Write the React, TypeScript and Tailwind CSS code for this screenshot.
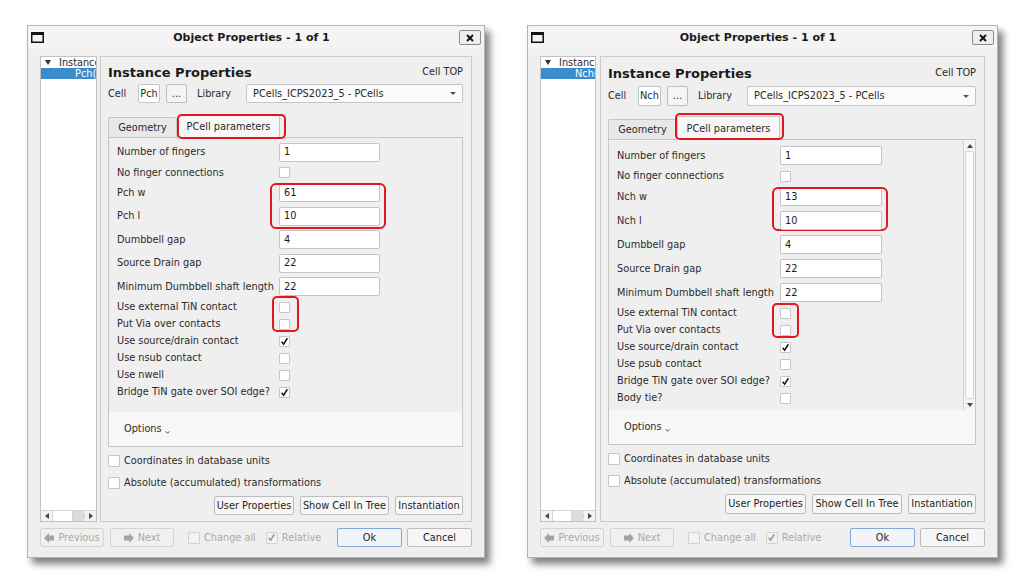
import React from "react";

type Row = { label: string; kind: "in" | "cb"; value?: string; on?: boolean; mark?: "in" | "cb" };

const PCH: Row[] = [
  { label: "Number of fingers", kind: "in", value: "1" },
  { label: "No finger connections", kind: "cb" },
  { label: "Pch w", kind: "in", value: "61", mark: "in" },
  { label: "Pch l", kind: "in", value: "10" },
  { label: "Dumbbell gap", kind: "in", value: "4" },
  { label: "Source Drain gap", kind: "in", value: "22" },
  { label: "Minimum Dumbbell shaft length", kind: "in", value: "22" },
  { label: "Use external TiN contact", kind: "cb", mark: "cb" },
  { label: "Put Via over contacts", kind: "cb" },
  { label: "Use source/drain contact", kind: "cb", on: true },
  { label: "Use nsub contact", kind: "cb" },
  { label: "Use nwell", kind: "cb" },
  { label: "Bridge TiN gate over SOI edge?", kind: "cb", on: true },
];

const NCH: Row[] = [
  { label: "Number of fingers", kind: "in", value: "1" },
  { label: "No finger connections", kind: "cb" },
  { label: "Nch w", kind: "in", value: "13", mark: "in" },
  { label: "Nch l", kind: "in", value: "10" },
  { label: "Dumbbell gap", kind: "in", value: "4" },
  { label: "Source Drain gap", kind: "in", value: "22" },
  { label: "Minimum Dumbbell shaft length", kind: "in", value: "22" },
  { label: "Use external TiN contact", kind: "cb", mark: "cb" },
  { label: "Put Via over contacts", kind: "cb" },
  { label: "Use source/drain contact", kind: "cb", on: true },
  { label: "Use psub contact", kind: "cb" },
  { label: "Bridge TiN gate over SOI edge?", kind: "cb", on: true },
  { label: "Body tie?", kind: "cb" },
];

function Box({ on = false, dim = false, big = false }: { on?: boolean; dim?: boolean; big?: boolean }) {
  return (
    <span
      className={`flex shrink-0 items-center justify-center rounded-[1px] border ${big ? "h-[12px] w-[12px]" : "h-[11px] w-[11px]"} ${
        dim ? "border-[#d2d2d2] bg-[#f3f3f3]" : "border-[#c6c6c6] bg-white"
      }`}
    >
      {on && (
        <svg viewBox="0 0 10 10" className="h-[9px] w-[9px]">
          <path d="M1.8 5.4 L4 8 L8.2 1.4" fill="none" stroke={dim ? "#9c9c9c" : "#151515"} strokeWidth="1.7" />
        </svg>
      )}
    </span>
  );
}

function Btn({ children, className = "", dim = false, focus = false }: { children: React.ReactNode; className?: string; dim?: boolean; focus?: boolean }) {
  return (
    <div
      className={`flex items-center justify-center gap-[4px] rounded-[2px] border whitespace-nowrap ${
        focus
          ? "border-[#7fa9d6] bg-[#f1f4f8] text-[#1f1f1f]"
          : dim
          ? "border-[#d3d3d3] bg-[#f0f0f0] text-[#a9a9a9]"
          : "border-[#bcbcbc] bg-[#f6f6f6] text-[#1f1f1f]"
      } ${className}`}
    >
      {children}
    </div>
  );
}

function Arrow({ left }: { left: boolean }) {
  return (
    <svg viewBox="0 0 10 10" className="h-[10px] w-[10px]">
      <path
        d={left ? "M0 5 L5 0 L5 2.5 L10 2.5 L10 7.5 L5 7.5 L5 10 Z" : "M10 5 L5 0 L5 2.5 L0 2.5 L0 7.5 L5 7.5 L5 10 Z"}
        fill="#a3a3a3"
      />
    </svg>
  );
}

function Dialog({ n }: { n: boolean }) {
  const rows = n ? NCH : PCH;
  return (
    <div
      className={`flex flex-col border border-[#b4b4b4] bg-[#efefef] shadow-[5px_6px_7px_rgba(0,0,0,0.5)] ${
        n ? "w-[471px]" : "w-[458px]"
      }`}
    >
      {/* title bar */}
      <div className="flex h-[23px] items-center bg-[#f4f4f4] px-[3px]">
        <svg width="13" height="11" viewBox="0 0 13 11">
          <rect x="0.75" y="0.75" width="11.5" height="9.5" fill="none" stroke="#111" strokeWidth="1.5" />
          <rect x="0" y="0" width="13" height="3" fill="#111" />
        </svg>
        <div className="flex-1 text-center text-[11px] font-bold text-[#1b1b1b]">Object Properties - 1 of 1</div>
        <div className="flex h-[15px] w-[22px] items-center justify-center rounded-[2px] border border-[#8c8c8c] bg-[#eeeeee]">
          <svg viewBox="0 0 8 8" className="h-[8px] w-[8px]">
            <path d="M1 1 L7 7 M7 1 L1 7" stroke="#111" strokeWidth="1.9" />
          </svg>
        </div>
      </div>

      <div className="flex flex-col px-[12px] pb-[10px] pt-[7px]">
        <div className="flex h-[466px] gap-[3px]">
          {/* tree */}
          <div className={`flex flex-col border border-[#c2c2c2] bg-white ${n ? "w-[56px]" : "w-[57px]"}`}>
            <div className="flex h-[11px] items-center overflow-hidden whitespace-nowrap pl-[4px] text-[#2b2b2b]">
              <svg viewBox="0 0 6 5" className="h-[5px] w-[6px] shrink-0">
                <path d="M0 0 L6 0 L3 5 Z" fill="#333" />
              </svg>
              <span className="ml-[8px]">Instances</span>
            </div>
            <div className="flex h-[11px] items-center overflow-hidden whitespace-nowrap bg-[#3a8ccd] pl-[34px] text-white">
              {n ? "Nch(0,0)" : "Pch(0,0)"}
            </div>
            <div className="flex-1" />
            <div className="flex h-[11px] items-center border-t border-[#d4d4d4] bg-[#f3f3f3]">
              <div className="flex w-[11px] justify-center">
                <svg viewBox="0 0 4 6" className="h-[6px] w-[4px]">
                  <path d="M4 0 L0 3 L4 6 Z" fill="#444" />
                </svg>
              </div>
              <div className="h-full flex-1 border-x border-[#d4d4d4] bg-white" />
              <div className="h-full w-[11px] bg-[#dcdcdc]" />
              <div className="flex w-[12px] justify-center border-l border-[#d4d4d4]">
                <svg viewBox="0 0 4 6" className="h-[6px] w-[4px]">
                  <path d="M0 0 L4 3 L0 6 Z" fill="#444" />
                </svg>
              </div>
            </div>
          </div>

          {/* main panel */}
          <div className={`flex flex-1 flex-col border border-[#cacaca] pl-[7px] pr-[8px] ${n ? "ml-[1px] pt-[8px]" : "pt-[7px]"}`}>
            <div className="flex h-[16px] items-center justify-between">
              <span className="text-[13px] font-bold text-[#1b1b1b]">Instance Properties</span>
              <span>Cell TOP</span>
            </div>

            <div className={`flex items-center ${n ? "mt-[5px] h-[20px]" : "mt-[4px] h-[19px]"}`}>
              <span className="w-[30px]">Cell</span>
              <div className={`flex h-full items-center justify-center rounded-[2px] border border-[#c4c4c4] bg-white ${n ? "w-[23px]" : "w-[22px]"}`}>
                {n ? "Nch" : "Pch"}
              </div>
              <div className="ml-[6px] flex h-full w-[21px] items-center justify-center rounded-[2px] border border-[#bdbdbd] bg-[#f5f5f5]">
                ...
              </div>
              <span className="ml-[10px] w-[49px]">Library</span>
              <div className="flex h-full flex-1 items-center justify-between rounded-[2px] border border-[#c4c4c4] bg-[#fbfbfb] pl-[6px] pr-[6px]">
                <span>PCells_ICPS2023_5 - PCells</span>
                <svg viewBox="0 0 6 3" className="h-[3px] w-[6px]">
                  <path d="M0 0 L6 0 L3 3 Z" fill="#555" />
                </svg>
              </div>
            </div>

            {/* tabs */}
            <div className={`flex items-end ${n ? "mt-[10px] h-[23px]" : "mt-[12px] h-[22px]"}`}>
              <div className="flex h-[20px] w-[69px] items-center justify-center rounded-t-[2px] border border-b-0 border-[#c6c6c6] bg-[#e8e8e8]">
                Geometry
              </div>
              <div className={`relative z-10 -mb-px flex w-[103px] items-center justify-center rounded-t-[2px] border border-b-0 border-[#c6c6c6] bg-[#f7f7f7] ${n ? "h-[24px]" : "h-[23px]"}`}>
                PCell parameters
                <span
                  className={`absolute rounded-[5px] border-2 border-[#e3161d] ${
                    n ? "-left-[3px] -top-[4px] h-[27px] w-[109px]" : "-left-[1px] -top-[2px] h-[25px] w-[109px]"
                  }`}
                />
              </div>
            </div>

            {/* tab content */}
            <div className={`flex flex-col border border-[#c6c6c6] ${n ? "h-[306px]" : "h-[310px]"}`}>
              <div className="flex flex-1 overflow-hidden">
                <div className={`flex flex-1 flex-col ${n ? "pt-[3.5px]" : "pt-[2.5px]"}`}>
                  {rows.map((r) => (
                    <div key={r.label} className={`flex items-center ${r.kind === "in" ? (n ? "h-[24px]" : "h-[23.5px]") : "h-[17px]"}`}>
                      <span className={`whitespace-nowrap pl-[8px] ${n ? "w-[171px]" : "w-[170px]"}`}>{r.label}</span>
                      <div className="relative flex items-center">
                        {r.kind === "in" ? (
                          <div
                            className={`flex h-[19px] items-center rounded-[2px] border border-[#c4c4c4] bg-white pl-[4px] text-[#1b1b1b] ${
                              n ? "w-[102px]" : "w-[101px]"
                            }`}
                          >
                            {r.value}
                          </div>
                        ) : (
                          <Box on={r.on} />
                        )}
                        {r.mark === "in" && (
                          <span
                            className={`absolute rounded-[6px] border-2 border-[#e3161d] ${
                              n ? "-left-[8px] top-0 h-[44px] w-[116px]" : "-left-[9px] top-0 h-[46px] w-[116px]"
                            }`}
                          />
                        )}
                        {r.mark === "cb" && (
                          <span
                            className={`absolute rounded-[5px] border-2 border-[#e3161d] ${
                              n ? "-left-[8px] -top-[5px] h-[35px] w-[27px]" : "-left-[7px] -top-[6px] h-[36px] w-[27px]"
                            }`}
                          />
                        )}
                      </div>
                    </div>
                  ))}
                </div>
                {n && (
                  <div className="flex w-[12px] flex-col border-l border-[#d2d2d2] bg-[#f4f4f4]">
                    <div className="flex h-[11px] items-center justify-center">
                      <svg viewBox="0 0 6 4" className="h-[4px] w-[6px]">
                        <path d="M0 4 L6 4 L3 0 Z" fill="#444" />
                      </svg>
                    </div>
                    <div className="mx-[1px] flex-1 rounded-[1px] border border-[#d6d6d6] bg-[#fafafa]" />
                    <div className="flex h-[11px] items-center justify-center">
                      <svg viewBox="0 0 6 4" className="h-[4px] w-[6px]">
                        <path d="M0 0 L6 0 L3 4 Z" fill="#444" />
                      </svg>
                    </div>
                  </div>
                )}
              </div>
              <div className="flex h-[34px] items-center bg-[#f7f7f7] pl-[15px]">
                <span>Options</span>
                <svg viewBox="0 0 6 4" className="ml-[3px] mt-[6px] h-[3px] w-[5px]">
                  <path d="M0.5 0.5 L3 3 L5.5 0.5" fill="none" stroke="#333" strokeWidth="1.2" />
                </svg>
              </div>
            </div>

            <div className="mt-[4px] flex h-[20px] items-center gap-[4px]">
              <Box big />
              <span>Coordinates in database units</span>
            </div>
            <div className="mt-[2px] flex h-[20px] items-center gap-[4px]">
              <Box big />
              <span>Absolute (accumulated) transformations</span>
            </div>
            <div className={`mt-[3px] flex justify-end gap-[6px] ${n ? "h-[20px]" : "h-[19px]"}`}>
              <Btn className={n ? "w-[81px]" : "w-[80px]"}>User Properties</Btn>
              <Btn className={n ? "w-[90px]" : "w-[89px]"}>Show Cell In Tree</Btn>
              <Btn className="w-[68px]">Instantiation</Btn>
            </div>
          </div>
        </div>

        {/* bottom row */}
        <div className="mt-[6px] flex h-[19px] items-center">
          <Btn dim className="h-full w-[64px]">
            <Arrow left />
            Previous
          </Btn>
          <Btn dim className="ml-[6px] h-full w-[64px]">
            <Arrow left={false} />
            Next
          </Btn>
          <span className="ml-[14px]">
            <Box dim big />
          </span>
          <span className="ml-[4px] text-[#ababab]">Change all</span>
          <span className="ml-[10px]">
            <Box dim big on />
          </span>
          <span className="ml-[4px] text-[#ababab]">Relative</span>
          <div className="flex-1" />
          <Btn focus className="h-full w-[65px]">
            Ok
          </Btn>
          <Btn className="ml-[5px] h-full w-[65px]">Cancel</Btn>
        </div>
      </div>
    </div>
  );
}

export default function App() {
  return (
    <div className="h-[585px] w-[1024px] overflow-hidden bg-white font-['DejaVu_Sans',sans-serif] text-[9.75px] leading-none text-[#2b2b2b]">
      <div className="flex items-start gap-[42px] pl-[27px] pt-[25px]">
        <Dialog n={false} />
        <Dialog n={true} />
      </div>
    </div>
  );
}
